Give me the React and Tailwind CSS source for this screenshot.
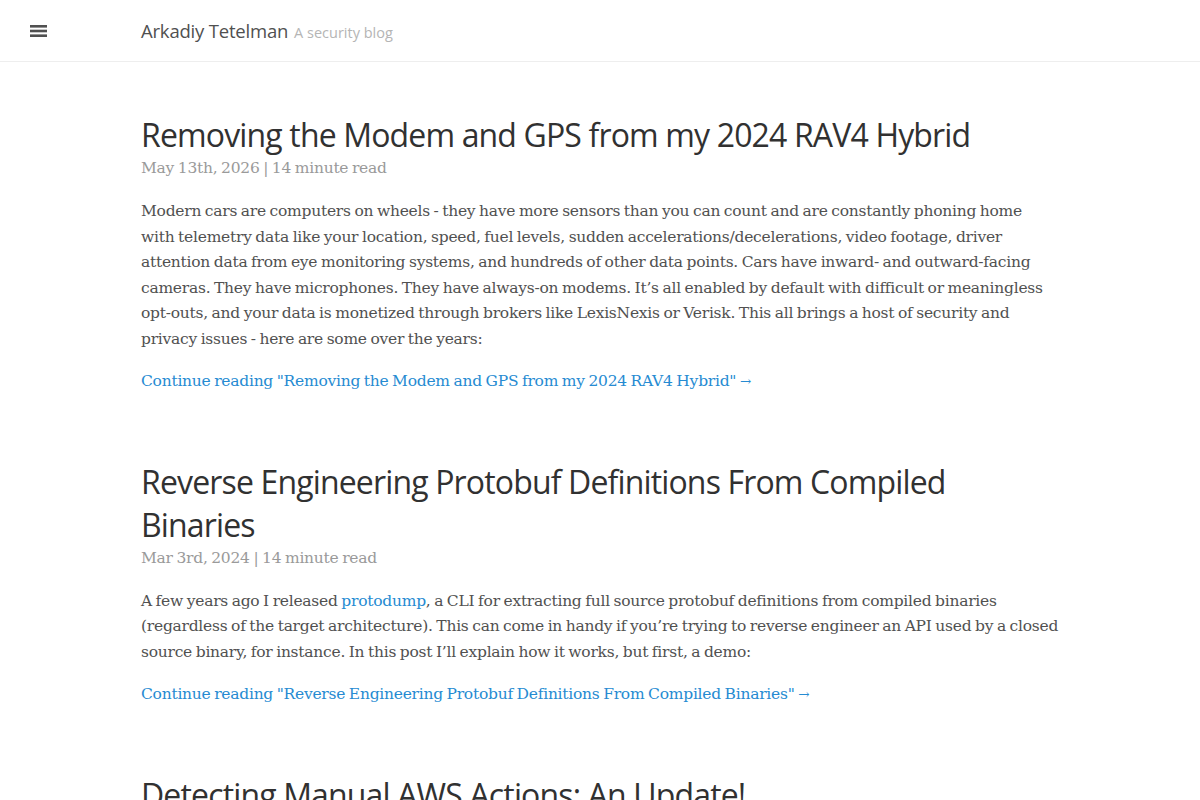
import React from 'react';

const posts = [
  {
    title: 'Removing the Modem and GPS from my 2024 RAV4 Hybrid',
    date: 'May 13th, 2026',
    read: '14 minute read',
    body: (
      <>
        Modern cars are computers on wheels - they have more sensors than you can count and are constantly phoning home
        with telemetry data like your location, speed, fuel levels, sudden accelerations/decelerations, video footage, driver
        attention data from eye monitoring systems, and hundreds of other data points. Cars have inward- and outward-facing
        cameras. They have microphones. They have always-on modems. It’s all enabled by default with difficult or meaningless
        opt-outs, and your data is monetized through brokers like LexisNexis or Verisk. This all brings a host of security and
        privacy issues - here are some over the years:
      </>
    ),
  },
  {
    title: 'Reverse Engineering Protobuf Definitions From Compiled Binaries',
    date: 'Mar 3rd, 2024',
    read: '14 minute read',
    body: (
      <>
        A few years ago I released <a href="#" className="text-[#268bd2]">protodump</a>, a CLI for extracting full source
        protobuf definitions from compiled binaries (regardless of the target architecture). This can come in handy if
        you’re trying to reverse engineer an API used by a closed source binary, for instance. In this post I’ll explain how
        it works, but first, a demo:
      </>
    ),
  },
  {
    title: 'Detecting Manual AWS Actions: An Update!',
    date: 'Jan 8th, 2024',
    read: '6 minute read',
    body: <>An update on detecting manual actions in AWS.</>,
  },
];

const Header = () => (
  <header className="h-[62px] border-b border-[#eeeeee] flex items-center">
    <button className="w-[77px] h-full flex items-center justify-center">
      <svg width="17" height="12" viewBox="0 0 17 12">
        <rect x="0" y="0" width="17" height="2.6" fill="#505050" />
        <rect x="0" y="4.7" width="17" height="2.6" fill="#505050" />
        <rect x="0" y="9.4" width="17" height="2.6" fill="#505050" />
      </svg>
    </button>
    <div className="ml-[64px] flex items-baseline gap-[6px] font-['Open_Sans',sans-serif]">
      <span className="text-[18.5px] text-[#505050] tracking-[-0.2px]">Arkadiy Tetelman</span>
      <span className="text-[14.5px] text-[#b5b5b5]">A security blog</span>
    </div>
  </header>
);

const Post = ({ post }) => (
  <article className="mb-[65px]">
    <h1 className="font-['Open_Sans',sans-serif] text-[32px] leading-[43px] text-[#313131] tracking-[-0.85px]">
      {post.title}
    </h1>
    <div className="text-[15.5px] leading-[25px] tracking-[-0.25px] [word-spacing:-1px] text-[#9a9a9a] mb-[18px]">
      {post.date} | {post.read}
    </div>
    <p className="text-[15.5px] leading-[25.5px] tracking-[-0.25px] [word-spacing:-1px] text-[#515151] mb-[17px]">
      {post.body}
    </p>
    <a href="#" className="text-[15.5px] leading-[25.5px] tracking-[-0.25px] [word-spacing:-1px] text-[#268bd2]">
      Continue reading "{post.title}" <span className="text-[13.5px]">→</span>
    </a>
  </article>
);

export default function App() {
  return (
    <div className="min-h-screen bg-white font-['DejaVu_Serif',serif]">
      <Header />
      <main className="ml-[141px] pt-[51px] w-[918px]">
        {posts.map((p) => (
          <Post key={p.title} post={p} />
        ))}
      </main>
    </div>
  );
}
